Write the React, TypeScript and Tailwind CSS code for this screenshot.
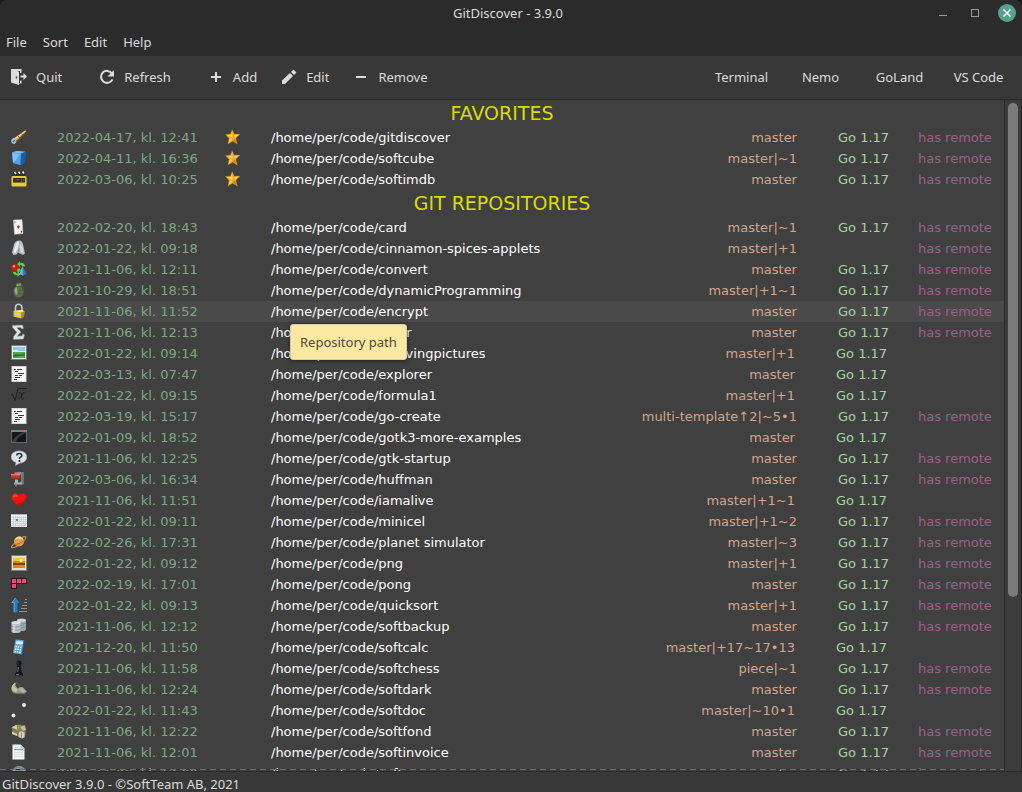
import React from "react";

type IconName =
  | "telescope" | "cube" | "clapper" | "card" | "ghost" | "convert" | "grenade" | "lock" | "sigma"
  | "picture" | "document" | "formula" | "terminal" | "question" | "clamp" | "heart" | "grid"
  | "planet" | "sunset" | "pong" | "sort" | "database" | "calculator" | "pawn" | "rabbit" | "dots"
  | "box" | "invoice" | "globe";

interface Repo {
  icon: IconName;
  date: string;
  name: string;
  branch: string;
  go?: boolean;
  remote?: boolean;
}

const favorites: Repo[] = [
  { icon: "telescope", date: "2022-04-17, kl. 12:41", name: "gitdiscover", branch: "master", go: true, remote: true },
  { icon: "cube", date: "2022-04-11, kl. 16:36", name: "softcube", branch: "master|~1", go: true, remote: true },
  { icon: "clapper", date: "2022-03-06, kl. 10:25", name: "softimdb", branch: "master", go: true, remote: true },
];

const repositories: Repo[] = [
  { icon: "card", date: "2022-02-20, kl. 18:43", name: "card", branch: "master|~1", go: true, remote: true },
  { icon: "ghost", date: "2022-01-22, kl. 09:18", name: "cinnamon-spices-applets", branch: "master|+1", remote: true },
  { icon: "convert", date: "2021-11-06, kl. 12:11", name: "convert", branch: "master", go: true, remote: true },
  { icon: "grenade", date: "2021-10-29, kl. 18:51", name: "dynamicProgramming", branch: "master|+1~1", go: true, remote: true },
  { icon: "lock", date: "2021-11-06, kl. 11:52", name: "encrypt", branch: "master", go: true, remote: true },
  { icon: "sigma", date: "2021-11-06, kl. 12:13", name: "euler", branch: "master", go: true, remote: true },
  { icon: "picture", date: "2022-01-22, kl. 09:14", name: "evolvingpictures", branch: "master|+1", go: true },
  { icon: "document", date: "2022-03-13, kl. 07:47", name: "explorer", branch: "master", go: true },
  { icon: "formula", date: "2022-01-22, kl. 09:15", name: "formula1", branch: "master|+1", go: true },
  { icon: "document", date: "2022-03-19, kl. 15:17", name: "go-create", branch: "multi-template↑2|~5•1", go: true, remote: true },
  { icon: "terminal", date: "2022-01-09, kl. 18:52", name: "gotk3-more-examples", branch: "master", go: true },
  { icon: "question", date: "2021-11-06, kl. 12:25", name: "gtk-startup", branch: "master", go: true, remote: true },
  { icon: "clamp", date: "2022-03-06, kl. 16:34", name: "huffman", branch: "master", go: true, remote: true },
  { icon: "heart", date: "2021-11-06, kl. 11:51", name: "iamalive", branch: "master|+1~1", go: true },
  { icon: "grid", date: "2022-01-22, kl. 09:11", name: "minicel", branch: "master|+1~2", go: true, remote: true },
  { icon: "planet", date: "2022-02-26, kl. 17:31", name: "planet simulator", branch: "master|~3", go: true, remote: true },
  { icon: "sunset", date: "2022-01-22, kl. 09:12", name: "png", branch: "master|+1", go: true, remote: true },
  { icon: "pong", date: "2022-02-19, kl. 17:01", name: "pong", branch: "master", go: true, remote: true },
  { icon: "sort", date: "2022-01-22, kl. 09:13", name: "quicksort", branch: "master|+1", go: true, remote: true },
  { icon: "database", date: "2021-11-06, kl. 12:12", name: "softbackup", branch: "master", go: true, remote: true },
  { icon: "calculator", date: "2021-12-20, kl. 11:50", name: "softcalc", branch: "master|+17~17•13", go: true },
  { icon: "pawn", date: "2021-11-06, kl. 11:58", name: "softchess", branch: "piece|~1", go: true, remote: true },
  { icon: "rabbit", date: "2021-11-06, kl. 12:24", name: "softdark", branch: "master", go: true, remote: true },
  { icon: "dots", date: "2022-01-22, kl. 11:43", name: "softdoc", branch: "master|~10•1", go: true },
  { icon: "box", date: "2021-11-06, kl. 12:22", name: "softfond", branch: "master", go: true, remote: true },
  { icon: "invoice", date: "2021-11-06, kl. 12:01", name: "softinvoice", branch: "master", go: true, remote: true },
  { icon: "globe", date: "2021-11-06, kl. 12:00", name: "softmem", branch: "master", go: true, remote: true },
];

const art: Record<IconName, React.ReactNode> = {
  telescope: (
    <>
      <path d="M1.800 10 14 1.500l1.500 1.500L10 9l-5 5z" fill="#7a4a1c" />
      <path d="M1.800 10 14 1.500l1 .8L6 11z" fill="#e0b65c" />
      <path d="M3.500 10.200 14.500 2.200" stroke="#fff0b0" strokeWidth=".8" />
      <path d="m7 7 2.200 2.500M10.500 4.300l1.500 2" stroke="#8a5520" strokeWidth=".8" />
      <ellipse cx="2.800" cy="12" rx="2.200" ry="2.600" fill="#9cc8ec" stroke="#b8bcbf" strokeWidth=".8" />
      <path d="m2 13 1.800-1.800" stroke="#3d6d9e" strokeWidth="1.100" />
    </>
  ),
  cube: (
    <>
      <path d="M1 2 6 1l8.500.8L14 12l-4.500 3L2 13z" fill="#2d7fd0" />
      <path d="m1 2.500 9 1-.5 11.500L2 13z" fill="#4fa3ea" />
      <path d="M1 2.500 6 1l8.500.8-4.500 1.700z" fill="#7fc0f2" />
      <path d="m10 3.500 4.500-1.700L14 12l-4.500 3z" fill="#155fae" />
      <path d="m1.500 3.200 7.500.8-5.500 7.500-1.500.5z" fill="#9fd6fb" opacity=".6" />
    </>
  ),
  clapper: (
    <>
      <rect x=".5" y="5" width="15" height="10.500" rx="1.500" fill="#e4cf2e" />
      <path d="M1 5 2 1l12-.5.5 4.500z" fill="#303030" />
      <path d="m3.500 1 1.500 2M7.500.8l1.500 2M11.500.5l1.500 2" stroke="#f4f4f4" strokeWidth="1.600" />
      <rect x="2" y="7" width="12" height="4.500" rx=".5" fill="#2b280c" />
      <path d="M4 8v2.500M6 10.500V8l1 1 1-1v2.500M10 8v2.500h1V8zM12.500 8v2.500" stroke="#7d7217" strokeWidth=".6" fill="none" />
    </>
  ),
  card: (
    <>
      <path d="m2.500 1 8.500-.3L12 14.500l-8.500.8z" fill="#f3f3f3" stroke="#c8c8c8" strokeWidth=".6" />
      <path d="m7.200 6 1.700 1.800-1.400 2L5.800 8z" fill="#dd1b14" />
      <path d="m3.500 2 1.200 1.200-1 1.200zM10.500 11.500l1 1.200-.8 1.200-1-1.200z" fill="#dd1b14" />
    </>
  ),
  ghost: (
    <>
      <path d="M2.500 6.500C3 2.500 5 .5 8 .5s4 2.500 4.500 6l1.500 7-2 1.500-3-1.500-2-1-1.500 2-3 .5L1 12.500z" fill="#b4bcc2" />
      <path d="M4 6C4.700 3 6 1.500 8 1.500L7 8l-2.800 5.500-1.700-1z" fill="#e6eaed" />
      <path d="M8.500 6 10 3.500l1.700 5 .8 4.500-2.500-1z" fill="#d5dade" />
      <path d="m8 8-1.200 3 1 .8.800-1.500z" fill="#7f888f" />
    </>
  ),
  convert: (
    <>
      <circle cx="4" cy="6.500" r="3.800" fill="#c51d12" />
      <circle cx="3" cy="5.200" r="1.300" fill="#f58b7d" />
      <path d="m11.500 5 4 8-3.500 1.500-3.500-1.500z" fill="#2f79c6" />
      <path d="m11.500 5 .5 9.500-3.500-1.500z" fill="#77b3e8" />
      <path d="M6 3 9 .2v1.600c3.500 0 5 1 5 3.700l-2.700-.2C11 4.200 10 4 9 4v2z" fill="#57d437" />
      <path d="m9.500 13-3 2.900v-1.600C3.500 14.200 2 13 1.800 10.700l3 .3c.2 1 1 1.500 1.700 1.500V10z" fill="#57d437" />
      <path d="m5.500 9 3-2 1.500 2.500-2.500 2z" fill="#57d437" />
    </>
  ),
  grenade: (
    <>
      <path d="M2.500 9c0-3 2-5 4.500-5.200 3.500-.2 5.500 2.500 5.500 6 0 3.500-2 5.700-5 5.700-3.500 0-5-3-5-6.500z" fill="#5b7247" />
      <path d="M4.500 4.500 4.800 1.500 10 .5l2.200 2.300L13.500 9l-1 1.500L10.500 5z" fill="#46553c" />
      <path d="M5.500 2 9.500 1.200l1 2.300-5 .8z" fill="#8b9a78" />
      <path d="M5.500 5.500v9M9 5.500v9M3 8.500h8M3 11.500h9" stroke="#475c38" strokeWidth=".5" />
      <path d="M3.500 9c0-2 1-3.500 2.500-4l.5 7-1.500 1z" fill="#a9b79a" opacity=".8" />
    </>
  ),
  lock: (
    <>
      <path d="M4.500 8V4.500a3.200 3.200 0 0 1 6.400 0V9" stroke="#c3c8c9" strokeWidth="1.600" fill="none" />
      <path d="m2.500 8 8.500-1 2.500 1.200-.5 5.300-3 2-7.500-2z" fill="#e5c33c" />
      <path d="m2.500 8 8.500-1 2.500 1.200-3.200 1z" fill="#fbee9c" />
      <path d="m10.300 9.200 3.200-1-.5 5.300-3 2z" fill="#b08a1e" />
      <path d="M4 10.200h5l-.5 2.500-4.300-.7z" fill="#cfcfc0" />
    </>
  ),
  sigma: (
    <path d="M1.500 1.500 11.500 1l1 3.500-2 .3-.7-1.300-4 .2L10 8l-3.800 4.300 5-.5.5-1.900 1.800.8L12.500 15 2.500 15.500v-2.700L5.800 8.200 1.500 3.500z" fill="#e0e3e4" stroke="#8b8f91" strokeWidth=".5" />
  ),
  picture: (
    <>
      <rect x="0" y="0" width="16" height="15" fill="#77797b" />
      <rect x="1" y="1" width="14" height="13" fill="#e8ebe8" />
      <rect x="2" y="2" width="12" height="6" fill="#8fc7ee" />
      <path d="M2 5h4l2 1h6v2H2z" fill="#d7ecf8" />
      <rect x="2" y="7" width="12" height="6" fill="#5aa845" />
      <path d="M2 9.500C6 8 9 10 14 8v2.500L2 12z" fill="#2d7c3a" />
    </>
  ),
  document: (
    <>
      <rect x="1" y=".5" width="14" height="15" fill="#fafafa" stroke="#d5d5d5" />
      <path d="M3 3.500h2m1 0h5M4 5.500h3M7 7.500h6M4 9.500h3m1 0h3M4 11.500h5M3 13.500h3" stroke="#3a3a3a" strokeWidth="1" />
    </>
  ),
  formula: (
    <>
      <path d="m0 8 1.500-1 2.500 6.500L7 1.500h9" stroke="#1d1d1d" strokeWidth=".9" fill="none" />
      <path d="M8 6c2-1 2.500 0 2.500 3s.5 4 2.500 2.500M13.500 5.500c-2-.2-2.500 2.500-3.500 4s-1.500 2-2.800 1.300" stroke="#1d1d1d" strokeWidth=".9" fill="none" />
    </>
  ),
  terminal: (
    <>
      <rect x="0" y="1" width="16" height="13" fill="#5f6468" />
      <rect x="0" y="1" width="16" height="2" fill="#79838b" />
      <rect x="13" y="1" width="2" height="1" fill="#ef5b52" />
      <rect x="1" y="3" width="14" height="10" fill="#141516" />
      <path d="M1 12C4 8 8 5 12 3h3v1C9 6 6 9 5 13H1z" fill="#3c4042" />
    </>
  ),
  question: (
    <>
      <path d="M8 1c4.500 0 7.800 2.500 7.800 6S12.500 13 9 13l-4.500 2.500.5-3C2 11.500.2 9.500.2 7 .2 3.500 3.500 1 8 1z" fill="#dce5ec" stroke="#9fadb7" strokeWidth=".6" />
      <path d="M5.800 5.500c0-2.700 5-2.700 5 0 0 1.700-2.300 1.500-2.300 3.300" stroke="#272c31" strokeWidth="1.600" fill="none" />
      <rect x="7.600" y="10" width="1.800" height="1.800" fill="#272c31" />
    </>
  ),
  clamp: (
    <>
      <path d="M3.500 1.500 12.500 1v11.500L9 13v-2h1V3.500H3.500z" fill="#8d989e" />
      <path d="m10.500 1 2.500 1v11l-2.500 1z" fill="#667179" />
      <rect x="0" y="3" width="9" height="4.500" fill="#d22821" />
      <path d="M0 3h9v1.500H0z" fill="#f5746a" />
      <path d="M4 8.500h3v3h4v2H3v-2h1z" fill="#aab3b8" />
      <path d="M5 12v3.500" stroke="#81898e" strokeWidth="1.400" />
    </>
  ),
  heart: (
    <>
      <path d="M8 15C4 11 .5 8.500.5 5c0-2.200 1.700-3.800 3.800-3.800C6 1.200 7.300 2.200 8 3.800 8.700 2.200 10 1.200 11.700 1.200c2.100 0 3.800 1.600 3.800 3.800 0 3.500-3.500 6-7.500 10z" fill="#ea140d" />
      <path d="M2 5c0-2 1-2.700 2.500-2.700S6.800 3.500 7 5C5.500 4 4 4.500 2 6z" fill="#ff4c42" />
      <path d="M8 15c4-4 7.500-6.500 7.500-10C13 10 10 11 5 12z" fill="#a80804" opacity=".5" />
    </>
  ),
  grid: (
    <>
      <rect x="0" y="1" width="16" height="13" fill="#f1f4f6" />
      <rect x="0" y="1" width="16" height="1" fill="#a9b6c0" />
      <path d="M0 4.500h16M0 6.500h16M0 8.500h16M0 10.500h16M0 12.500h16M2.500 3v11M4.500 3v11M6.500 3v11M8.500 3v11M10.500 3v11M12.500 3v11M14.500 3v11" stroke="#b4bfc7" strokeWidth=".5" />
      <rect x="5" y="6" width="2" height="2" fill="#3c8dd2" />
    </>
  ),
  planet: (
    <>
      <circle cx="8" cy="7.500" r="5" fill="#e3a04b" />
      <path d="M4 6c3-3 6-1 8.500 0L11 3.500C9 2 6 2 4 6z" fill="#fbdca0" />
      <path d="M3.500 10c4 1 7-1 9.400-3" stroke="#b66c26" strokeWidth="1.200" fill="none" />
      <path d="M4 9C1 11.500 0 13 .8 13.500c1.500.8 5-1 8.500-3.500s6-5.500 5.500-7c-.3-.8-2-.3-4 .6" stroke="#c9955a" strokeWidth="1.100" fill="none" />
    </>
  ),
  sunset: (
    <>
      <rect x="0" y="0" width="16" height="16" fill="#7d7d7d" />
      <rect x="1" y="1" width="14" height="14" fill="#e4dfd4" />
      <rect x="2" y="3" width="12" height="10" fill="#d98a14" />
      <rect x="2" y="3" width="12" height="3" fill="#f5c04a" />
      <rect x="2" y="8" width="12" height="2" fill="#79420c" />
      <circle cx="10" cy="5.500" r="1.500" fill="#fff4a5" />
    </>
  ),
  pong: (
    <>
      <rect x="0" y="2" width="16" height="6" fill="#2f1119" />
      <rect x="0" y="7" width="6" height="6" fill="#2f1119" />
      <path d="M1 3h4v4H1zM6 3h4v4H6zM11 3h4v4h-4zM1 8h4v4H1z" fill="#e84b76" />
    </>
  ),
  sort: (
    <>
      <path d="m4.500.5 4.300 5.500H6.500v9.500h-4V6H.2z" fill="#1f7fc6" />
      <path d="M4.500 1 1 5.500h2.300V15" stroke="#63b5ec" strokeWidth=".8" fill="none" />
      <path d="M14 2.500h2M13 5.500h3M11 8.500h5M10 11.500h6M8 14.500h8" stroke="#8a969d" strokeWidth="1" />
    </>
  ),
  database: (
    <>
      <path d="M6 2v9.500c0 2 9 2 9 0V2z" fill="#98a6b1" />
      <ellipse cx="10.500" cy="2.300" rx="4.500" ry="1.800" fill="#c9d2d9" />
      <path d="M.5 4.500v9c0 2 9 2 9 0v-9z" fill="#b7c2ca" />
      <ellipse cx="5" cy="4.500" rx="4.500" ry="1.500" fill="#dbe1e5" />
      <path d="M.5 7.500c0 2 9 2 9 0M.5 10.500c0 2 9 2 9 0M10 6c3 0 5-.5 5-1.200M10 9.500c3 0 5-.5 5-1.200" stroke="#74828d" strokeWidth=".7" fill="none" />
      <path d="M3 6.500v8" stroke="#edf1f4" strokeWidth="1.200" opacity=".7" />
    </>
  ),
  calculator: (
    <>
      <path d="m4.500.5 8.500.8-2 14.200-9-1.500z" fill="#6aa6cb" />
      <path d="m5.500 2 6.500.5-.5 3-6.500-.5z" fill="#d8edf6" />
      <path d="m4.500 7.500 6.500.8M4 10l6.500.8M3.600 12.500l6.400.8" stroke="#edf5fa" strokeWidth="1.300" strokeDasharray="1.500 .8" />
      <path d="m13 1.300-2 14.200" stroke="#2e5d7f" strokeWidth=".9" />
    </>
  ),
  pawn: (
    <>
      <circle cx="8" cy="3" r="2.500" fill="#12161c" />
      <path d="M5.500 5.500h5l-1 1.500 1 5 1.500 1.500v2H4v-2L5.500 12l1-5z" fill="#12161c" />
      <path d="M7 2.500v1M7.500 7l-.8 5M5 14.500h3" stroke="#8291a0" strokeWidth=".8" />
    </>
  ),
  rabbit: (
    <>
      <path d="M.5 8C.5 5 2 2.500 5 1.500L4.500 5 7 7.500C9 5.500 12 5.500 13.500 8l2.300 2.500-2.300 2H4.500C2 12 .5 10.500.5 8z" fill="#99988f" />
      <path d="M.5 7.500C.5 5 2 3 4 2L3.500 6l3 2.500-1 2.500C3 11 1 9.800.5 7.500z" fill="#c9c0a6" />
      <path d="M5 1.800C7.500 2 8.500 4 8.500 6" stroke="#65645d" strokeWidth=".9" fill="none" />
      <path d="M7.500 8.500c2-2 4.500-1.500 5.500.5l2.500 1.500-3.500 1z" fill="#b0b0ab" />
    </>
  ),
  dots: (
    <>
      <path d="m3 13 10-10" stroke="#3a3e40" strokeWidth="1" />
      <circle cx="2.500" cy="13.500" r="1.900" fill="#f2f7f8" />
      <circle cx="13" cy="3" r="1.900" fill="#f2f7f8" />
    </>
  ),
  box: (
    <>
      <path d="M.5 4.500 5 2l5 .5 4-.5 1 4-1 7.500-3.500 2-3.500-2-5-3z" fill="#8e7856" />
      <path d="M.5 4.500 5 2l3 1-2 3.500z" fill="#d9cba8" />
      <path d="m6 2 4-.5L9 6 6 9z" fill="#7d9b4e" />
      <path d="m9 4 4.500-1.500 1.500 4L12 8z" fill="#c9b891" />
      <path d="M8 9.500 10 8l3.500 1.500v5L11 15.500 7.500 14z" fill="#cfcfca" />
      <path d="M1 8.500 6 11v2L1 11z" fill="#e2d6bb" />
      <path d="M10.500 9.500v5.500" stroke="#82807a" strokeWidth=".8" />
    </>
  ),
  invoice: (
    <>
      <path d="M1.500.5h8l4 4v11h-12z" fill="#f5f7f5" />
      <path d="m9.500.5 4 4h-4z" fill="#c0c6c1" />
      <path d="M3 5.500h9" stroke="#6fb552" strokeWidth="1.200" />
      <path d="M3 8.500h9M3 10.500h9M3 12.500h9M4 3.500h3" stroke="#d3dad1" strokeWidth=".8" />
    </>
  ),
  globe: (
    <>
      <circle cx="8" cy="8" r="7" fill="#9aabb9" />
      <path d="M2 5c3-3 5-3 7-2s3 1 5 1M1.500 8c4-3 9-3 13 0M5 2v12M8 1v14M11 2v12" stroke="#5f7384" strokeWidth=".8" fill="none" />
    </>
  ),
};

function RepoIcon({ name }: { name: IconName }) {
  return (
    <svg viewBox="0 0 16 16" className="block size-4" fill="none" aria-hidden="true">
      {art[name]}
    </svg>
  );
}

function Star() {
  return (
    <svg viewBox="0 0 16 16" className="block size-4" aria-hidden="true">
      <path d="m7.200.5 2 4.700 6-.2-4.300 4.200 1.500 6-4.700-3-4.900 3 1.200-5.800-3.700-4 5-.5z" fill="#f0ab2b" stroke="#a9680f" strokeWidth=".4" />
      <path d="M7.200 1.800 6.500 6l-4.500.2 3.500 1.500L7.500 9z" fill="#fdd871" />
      <path d="m9 5.700 5-.3-4 3z" fill="#fdd15c" />
      <path d="m5 9.500 2.500.5-4 4z" fill="#fdd15c" />
      <path d="m10 9.500 2 5-4.300-3z" fill="#cf8415" />
    </svg>
  );
}

function RepoRow({ repo, favorite, hovered }: { repo: Repo; favorite?: boolean; hovered?: boolean }) {
  return (
    <tr className={hovered ? "h-[21px] bg-[#4a4a4a]" : "h-[21px]"}>
      <td className="pt-[2px] pl-[11px] align-top"><RepoIcon name={repo.icon} /></td>
      <td className="text-[#7fa883]">{repo.date}</td>
      <td className="pt-[2px] align-top">{favorite && <Star />}</td>
      <td className="relative text-white">
        /home/per/code/{repo.name}
        {hovered && (
          <div
            role="tooltip"
            className="absolute top-[23px] left-[19px] z-10 flex h-9 items-center rounded-[3px] border border-[#d3cdb4] bg-[#fce8a0] px-[9px] font-['Noto_Sans',sans-serif] text-[13px] text-[#4c4a42] shadow-[0_1px_4px_rgba(0,0,0,0.5)]"
          >
            Repository path
          </div>
        )}
      </td>
      <td className={repo.remote ? "text-right text-[#d3a58c]" : "pr-[2px] text-right text-[#d3a58c]"}>{repo.branch}</td>
      <td className={repo.remote ? "pl-[41px] text-[#a5d6a0]" : "pl-[39px] text-[#a5d6a0]"}>{repo.go && "Go 1.17"}</td>
      <td className="text-[#9c6089]">{repo.remote && "has remote"}</td>
    </tr>
  );
}

function Heading({ children }: { children: React.ReactNode }) {
  return (
    <tr className="h-[27px]">
      <th colSpan={7} scope="colgroup" className="text-center align-top text-[19px] leading-[26px] font-normal text-[#dadc00]">
        {children}
      </th>
    </tr>
  );
}

function ToolButton({ label, children }: { label: string; children: React.ReactNode }) {
  return (
    <button type="button" className="flex items-center gap-[9px]">
      <svg viewBox="0 0 16 16" className="size-4" fill="none" aria-hidden="true">{children}</svg>
      {label}
    </button>
  );
}

export default function App() {
  return (
    <div className="h-screen bg-[#1b1b1b]">
      <div className="flex h-full flex-col overflow-hidden rounded-t-lg bg-[#404040] font-['Noto_Sans',sans-serif] text-[13px] leading-5 whitespace-nowrap text-[#dcdcdc]">
        <header className="bg-[#2b2b2b]">
          <div className="grid h-7 grid-cols-[1fr_auto_1fr] items-center pr-[6px] pb-[2px]">
            <h1 className="col-start-2">GitDiscover - 3.9.0</h1>
            <div className="flex items-center justify-end gap-[14px]">
              <button type="button" aria-label="Minimize" className="size-[18px]">
                <svg viewBox="0 0 18 18" className="size-[18px]"><path d="M5 11.500h8" stroke="#9a9a9a" /></svg>
              </button>
              <button type="button" aria-label="Maximize" className="size-[18px]">
                <svg viewBox="0 0 18 18" className="size-[18px]"><rect x="5.500" y="5.500" width="7" height="7" fill="none" stroke="#9a9a9a" /></svg>
              </button>
              <button type="button" aria-label="Close" className="size-[18px] rounded-full bg-[#56a08f]">
                <svg viewBox="0 0 18 18" className="size-[18px]"><path d="m5.500 5.500 7 7m0-7-7 7" stroke="#fff" strokeWidth="1.600" /></svg>
              </button>
            </div>
          </div>
          <nav className="flex h-7 items-center gap-4 px-[6px]">
            <button type="button">File</button>
            <button type="button">Sort</button>
            <button type="button">Edit</button>
            <button type="button">Help</button>
          </nav>
        </header>

        <div className="flex h-11 items-center justify-between border-b border-[#282828] bg-[#383838] pr-1 pb-[1px] pl-[11px]">
          <div className="flex items-center gap-[37px]">
            <ToolButton label="Quit">
              <path d="M0 0h10.500v4H9V2H6.500L8 3v11h1v-2.500h1.500V14.500H8V16L0 13.500z" fill="#dcdcdc" />
              <path d="M5.500 7.500v2" stroke="#383838" strokeWidth="1.300" />
              <path d="M9.500 6.500h3V4l3.500 3.500-3.500 3.500V8.500h-3z" fill="#dcdcdc" />
            </ToolButton>
            <ToolButton label="Refresh">
              <path d="M13.500 10.300a6 6 0 1 1-.5-5.800" stroke="#dcdcdc" strokeWidth="2" />
              <path d="M15 1v6.500H8.500z" fill="#dcdcdc" />
            </ToolButton>
            <div className="flex items-center gap-6">
              <ToolButton label="Add"><path d="M8 3v10M3 8h10" stroke="#dcdcdc" strokeWidth="2" /></ToolButton>
              <ToolButton label="Edit">
                <path d="M1 15v-3.500L9 4l3 3-8 8zM10 3l2-2q.5-.5 1 0l2 2q.5.500 0 1l-2 2z" fill="#dcdcdc" />
              </ToolButton>
              <ToolButton label="Remove"><path d="M3 8h10" stroke="#dcdcdc" strokeWidth="2" /></ToolButton>
            </div>
          </div>
          <div className="flex">
            <button type="button" className="w-[79px]">Terminal</button>
            <button type="button" className="w-[79px]">Nemo</button>
            <button type="button" className="w-[79px]">GoLand</button>
            <button type="button" className="w-[79px]">VS Code</button>
          </div>
        </div>

        <main className="relative flex min-h-0 flex-1 overflow-hidden">
          <div className="min-w-0 flex-1 overflow-hidden">
            <table className="w-full table-fixed border-collapse font-['DejaVu_Sans',sans-serif] text-[13px] leading-[21px]">
              <colgroup>
                <col className="w-[57px]" />
                <col className="w-[168px]" />
                <col className="w-[46px]" />
                <col />
                <col className="w-[200px]" />
                <col className="w-[121px]" />
                <col className="w-[86px]" />
              </colgroup>
              <tbody>
                <Heading>FAVORITES</Heading>
                {favorites.map((r) => <RepoRow key={r.name} repo={r} favorite />)}
                <Heading>GIT REPOSITORIES</Heading>
                {repositories.map((r) => <RepoRow key={r.name} repo={r} hovered={r.name === "encrypt"} />)}
              </tbody>
            </table>
          </div>
          <div className="w-[18px] border-x border-[#282828] bg-[#3c3c3c] px-[3px] pt-[3px]">
            <div className="h-[74%] rounded-full bg-[#7b7b7b]" />
          </div>
          <div className="absolute right-[18px] bottom-[1px] left-0 h-px bg-[repeating-linear-gradient(90deg,#6e6e6e_0_6px,#333333_6px_10px)]" />
        </main>

        <footer className="h-[21px] border-t border-[#282828] bg-[#383838] px-[2px] pt-[2px]">
          GitDiscover 3.9.0 - ©SoftTeam AB, 2021
        </footer>
      </div>
    </div>
  );
}
